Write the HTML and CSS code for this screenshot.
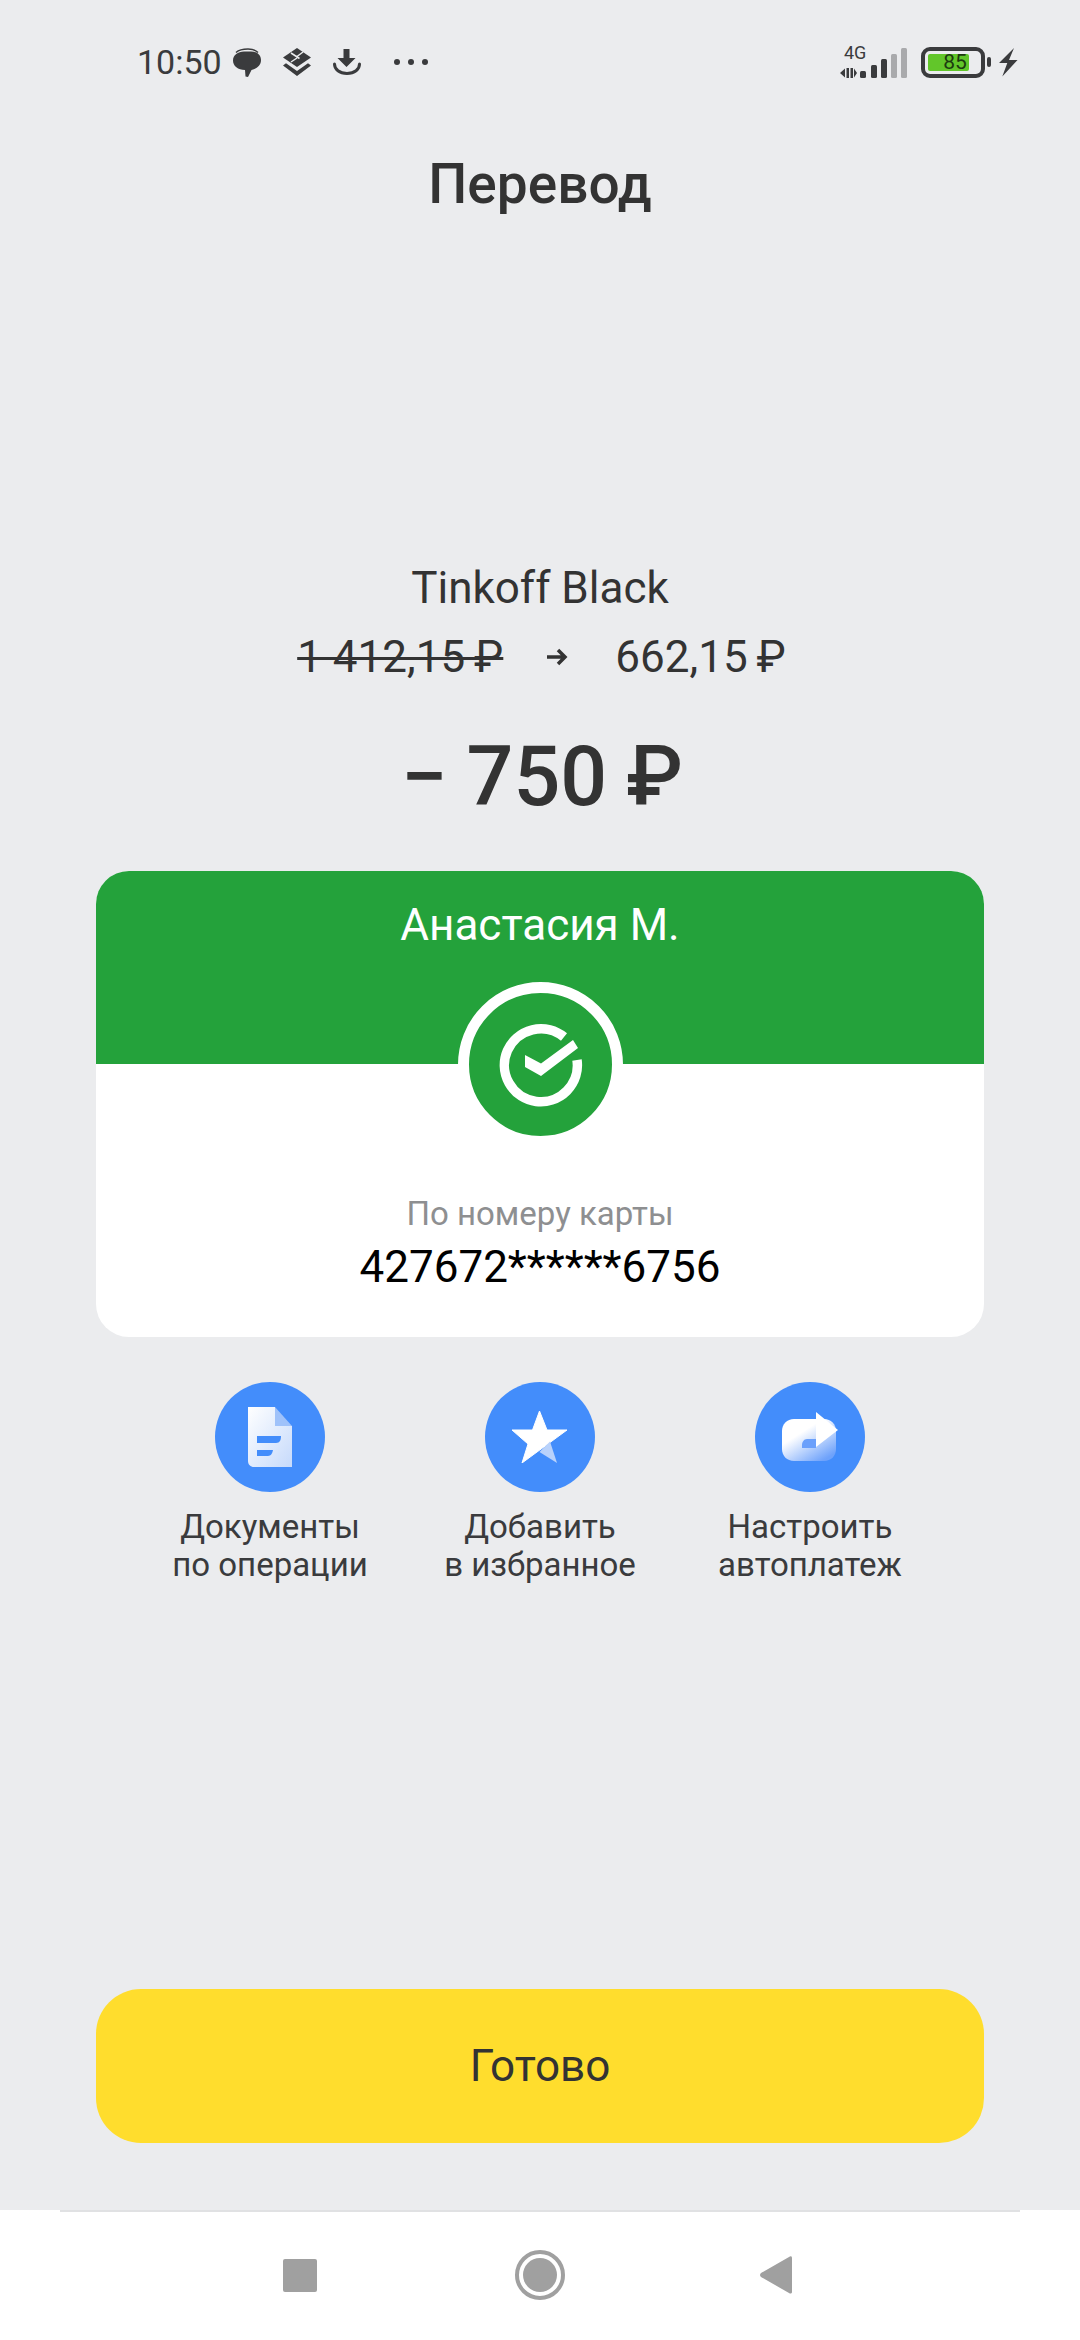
FILE: index.html
```html
<!DOCTYPE html>
<html lang="ru">
<head>
    <meta charset="UTF-8">
    <meta name="viewport" content="width=device-width, initial-scale=1.0">
    <title>Перевод</title>
    <link rel="stylesheet" href="styles.css">
</head>
<body>
    <div class="status-bar">
        <div class="status-left">
            <span class="clock">10:50</span>
            <svg class="st-icon bubble" viewBox="0 0 28 29"><path d="M11 3.500h7c6 0 10 3.500 10 8.500 0 5.500-4.500 9-9.500 10L15 29l-2.500-.5-.5-6.500C5 22 0 18 0 12.500 0 7 5 3.500 11 3.500z" fill="#3a3b3d"/><path d="M3 4.500C6 1.800 10 1 15 1c4 0 7.500 1 10 3.500" fill="none" stroke="#3a3b3d" stroke-width="1.500"/></svg>
            <svg class="st-icon layers" viewBox="0 0 28 28"><path d="M14 0l14 9.500L14 19 0 9.500z" fill="#3a3b3d"/><path d="M8 5l8.500 5.500M14 8.500l6-4.500M8 14l6-4" fill="none" stroke="#ebecee" stroke-width="1.500"/><path d="M0 17.500l3-2.200L14 23l11-7.700 3 2.200L14 28z" fill="#3a3b3d"/></svg>
            <svg class="st-icon download" viewBox="0 0 28 26"><path d="M10.500 0h6v9h6L13.500 18 4.500 9h6z" fill="#3a3b3d"/><path d="M1.500 15c0 5.500 5 9.500 12.500 9.500S26.500 20.500 26.500 15" fill="none" stroke="#3a3b3d" stroke-width="3" stroke-linecap="round"/></svg>
            <span class="dots"><i></i><i></i><i></i></span>
        </div>
        <div class="status-right">
            <svg class="signal" viewBox="0 0 67 31">
                <text x="4" y="12" class="net-label">4G</text>
                <path d="M0 26l5-4.500v9zM6.500 21h2.500v10H6.500zM10.500 21H13v10h-2.500zM14 21.500l3 4.500-3 4.500z" fill="#3a3b3d"/>
                <rect x="20" y="24" width="6" height="7" rx="1.500" fill="#3a3b3d"/>
                <rect x="31" y="18" width="6" height="13" rx="1.500" fill="#3a3b3d"/>
                <rect x="41" y="12" width="6" height="19" rx="1.500" fill="#3a3b3d"/>
                <rect x="51" y="7" width="6" height="24" rx="1.500" fill="#a9aaac"/>
                <rect x="61" y="1" width="6" height="30" rx="1.500" fill="#a9aaac"/>
            </svg>
            <div class="battery">
                <div class="battery-body"><div class="battery-level"></div><span class="battery-num">85</span></div>
                <div class="battery-nub"></div>
            </div>
            <svg class="bolt" viewBox="0 0 19 29"><path d="M15 0L0 15h8.300L3.300 28.500 18.500 12H10z" fill="#3a3b3d"/></svg>
        </div>
    </div>

    <h1 class="title">Перевод</h1>

    <main class="content">
        <div class="account">Tinkoff Black</div>
        <div class="balance">
            <s class="old-sum">1 412,15&#8201;₽</s>
            <svg class="balance-arrow" viewBox="0 0 22 18"><path d="M1 9h18M12 2l7 7-7 7" fill="none" stroke="#333" stroke-width="3.500"/></svg>
            <span class="new-sum">662,15&#8201;₽</span>
        </div>
        <div class="amount">− 750 ₽</div>

        <section class="card">
            <div class="card-head">Анастасия М.</div>
            <div class="badge">
                <svg viewBox="-72 -72 144 144" width="144" height="144">
                    <path d="M36 -5A36.500 36.500 0 1 1 23 -28" fill="none" stroke="#fff" stroke-width="9.500"/>
                    <path d="M-16 -10v12L0 11 37 -17 32 -25 0 -1.500z" fill="#fff"/>
                </svg>
            </div>
            <div class="card-body">
                <div class="card-label">По номеру карты</div>
                <div class="card-number">427672******6756</div>
            </div>
        </section>

        <div class="actions">
            <div class="action">
                <div class="action-icon">
                    <svg width="44" height="60" viewBox="0 0 44 60">
                        <defs><linearGradient id="docFill" x1="0" y1="0" x2="1" y2="1"><stop offset="0" stop-color="#fff"/><stop offset="1" stop-color="#c6dafb"/></linearGradient></defs>
                        <path d="M0 0h27v19h17v41H6c-3.500 0-6-2.500-6-6z" fill="url(#docFill)"/>
                        <path d="M27 0l17 19H27z" fill="#9fc2fa"/>
                        <path d="M9 29h24c0 4-1 7-5 7H9zM9 43h16c-.500 3-2 6-5 6H9z" fill="#438dfb"/>
                    </svg>
                </div>
                <div class="action-text">Документы<br>по операции</div>
            </div>
            <div class="action">
                <div class="action-icon">
                    <svg width="56" height="52" viewBox="0 0 56 52">
                        <path d="M27.500 0L35 19h20L10 52l6-19L0 19h20.500z" fill="#fff" stroke="#fff" stroke-width="1" stroke-linejoin="round"/>
                        <path d="M27.500 41l10.500-10.500 7 21.500z" fill="#b9d2fb"/>
                    </svg>
                </div>
                <div class="action-text">Добавить<br>в избранное</div>
            </div>
            <div class="action">
                <div class="action-icon">
                    <svg width="56" height="50" viewBox="0 0 56 50">
                        <defs><linearGradient id="shareFill" x1="0.100" y1="0.200" x2="0.750" y2="1"><stop offset="0.250" stop-color="#fff"/><stop offset="1" stop-color="#6ea2fb"/></linearGradient></defs>
                        <path d="M12 7h30c7 0 12 5 12 12v18c0 7-5 12-12 12H12C5 49 0 44 0 37V19C0 12 5 7 12 7z" fill="url(#shareFill)"/>
                        <path d="M20 36v-3c0-3 2-6 5-6h9v9z" fill="#6ba0fb"/>
                        <path d="M34 0l22 18-22 17z" fill="#fff"/>
                    </svg>
                </div>
                <div class="action-text">Настроить<br>автоплатеж</div>
            </div>
        </div>

        <button class="btn-done">Готово</button>
    </main>

    <nav class="nav-bar">
        <div class="nav-square"></div>
        <div class="nav-home"><div class="nav-home-dot"></div></div>
        <svg class="nav-back" viewBox="0 0 32 38"><path d="M32 2c0-2-1.500-2.500-3-1L1 17c-1.300 1-1.300 3 0 4l28 16c1.500 1 3 .5 3-1z" fill="#a0a0a0"/></svg>
    </nav>
</body>
</html>
```

FILE: styles.css
```css
* {
    box-sizing: border-box;
}

body {
    margin: 0;
    width: 1080px;
    height: 2340px;
    display: flex;
    flex-direction: column;
    font-family: Roboto, 'Noto Sans', sans-serif;
    background-color: #ebecee;
    color: #333;
}

/* status bar */
.status-bar {
    display: flex;
    justify-content: space-between;
    align-items: flex-start;
    padding: 40px 62px 0 137px;
    height: 84px;
}

.status-left, .status-right {
    display: flex;
    align-items: center;
    height: 44px;
}

.clock {
    font-size: 34px;
    line-height: 44px;
    color: #3a3b3d;
}

.st-icon {
    display: block;
}

.bubble {
    width: 28px;
    height: 29px;
    margin-left: 11px;
}

.layers {
    width: 28px;
    height: 28px;
    margin-left: 22px;
}

.download {
    width: 28px;
    height: 26px;
    margin-left: 22px;
}

.dots {
    display: flex;
    gap: 8px;
    margin-left: 33px;
}

.dots i {
    width: 6px;
    height: 6px;
    border-radius: 50%;
    background-color: #3a3b3d;
}

.signal {
    width: 67px;
    height: 31px;
    overflow: visible;
}

.net-label {
    font-size: 18px;
    fill: #3a3b3d;
}

.battery {
    display: flex;
    align-items: center;
    margin-left: 14px;
}

.battery-body {
    position: relative;
    width: 64px;
    height: 31px;
    border: 4px solid #3a3b3d;
    border-radius: 9px;
    padding: 3px;
}

.battery-level {
    width: 41px;
    height: 17px;
    border-radius: 2px;
    background-color: #62c62a;
}

.battery-num {
    position: absolute;
    left: 0;
    right: 0;
    top: 0;
    text-align: center;
    font-size: 21px;
    line-height: 23px;
    color: #1d3b10;
    margin-left: 4px;
}

.battery-nub {
    width: 4px;
    height: 10px;
    margin-left: 2px;
    border-radius: 2px;
    background-color: #3a3b3d;
}

.bolt {
    width: 19px;
    height: 29px;
    margin-left: 8px;
}

.title {
    margin: 70px 0 0;
    text-align: center;
    font-size: 55px;
    line-height: 60px;
    font-weight: 500;
}

.content {
    flex: 1;
    display: flex;
    flex-direction: column;
    padding: 0 96px;
}

.account {
    margin-top: 349px;
    text-align: center;
    font-size: 44px;
    line-height: 50px;
}

.balance {
    margin-top: 19px;
    padding-left: 3px;
    display: flex;
    justify-content: center;
    align-items: center;
    font-size: 44px;
    line-height: 50px;
}

.balance-arrow {
    width: 22px;
    height: 18px;
    margin: 0 47px 0 43px;
}

.old-sum {
    text-decoration-thickness: 3px;
}

.amount {
    margin-top: 45px;
    padding-left: 4px;
    text-align: center;
    font-size: 82.5px;
    line-height: 100px;
    font-weight: 500;
    word-spacing: -1.5px;
}

/* card */
.card {
    position: relative;
    margin-top: 44px;
    height: 466px;
    border-radius: 33px;
    overflow: hidden;
    background-color: #fff;
}

.card-head {
    height: 193px;
    padding-top: 29px;
    text-align: center;
    font-size: 44px;
    line-height: 50px;
    color: #fff;
    background-color: #24a23b;
}

.badge {
    position: absolute;
    left: 362px;
    top: 111px;
    width: 165px;
    height: 165px;
    border-radius: 50%;
    border: 11px solid #fff;
    background-color: #24a23b;
    display: flex;
    align-items: center;
    justify-content: center;
}

.badge svg {
    flex: none;
}

.card-body {
    padding-top: 130px;
    text-align: center;
}

.card-label {
    font-size: 33px;
    line-height: 40px;
    color: #8e8f91;
}

.card-number {
    margin-top: 6px;
    font-size: 44px;
    line-height: 54px;
    color: #000;
}

/* actions */
.actions {
    margin-top: 45px;
    display: grid;
    grid-template-columns: repeat(3, 270px);
    justify-content: center;
}

.action {
    display: flex;
    flex-direction: column;
    align-items: center;
}

.action-icon {
    width: 110px;
    height: 110px;
    border-radius: 50%;
    background-color: #438dfb;
    display: flex;
    align-items: center;
    justify-content: center;
}

.action-text {
    margin-top: 16px;
    text-align: center;
    font-size: 33px;
    line-height: 38px;
    color: #3a3b3d;
}

.btn-done {
    margin-top: auto;
    margin-bottom: 67px;
    height: 154px;
    border: none;
    border-radius: 45px;
    background-color: #ffdd2d;
    color: #333;
    font-family: inherit;
    font-size: 44px;
}

/* android nav */
.nav-bar {
    height: 130px;
    display: flex;
    align-items: center;
    background-color: #fff;
    padding-left: 283px;
    position: relative;
}

.nav-bar::before {
    content: "";
    position: absolute;
    left: 60px;
    right: 60px;
    top: 0;
    height: 2px;
    background-color: #e0e1e3;
}

.nav-square {
    width: 34px;
    height: 33px;
    border-radius: 2px;
    background-color: #a0a0a0;
}

.nav-home {
    width: 50px;
    height: 50px;
    margin-left: 198px;
    border-radius: 50%;
    border: 4px solid #a0a0a0;
    display: flex;
    align-items: center;
    justify-content: center;
}

.nav-home-dot {
    width: 34px;
    height: 34px;
    border-radius: 50%;
    background-color: #a0a0a0;
}

.nav-back {
    width: 32px;
    height: 38px;
    margin-left: 195px;
}
```
